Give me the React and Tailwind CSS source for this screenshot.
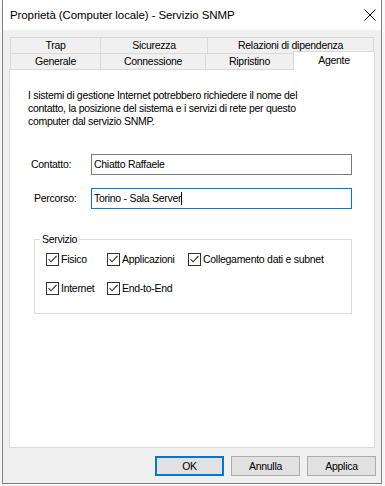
import React from "react";

const Check = ({ label }) => (
  <div className="flex items-center gap-[2px]">
    <span className="w-[13px] h-[13px] border border-[#333333] bg-white flex items-center justify-center">
      <svg width="11" height="11" viewBox="0 0 11 11">
        <path d="M1.5 5 L4 7.8 L9.5 2" stroke="#333333" strokeWidth="1.1" fill="none" />
      </svg>
    </span>
    <span>{label}</span>
  </div>
);

const Tab = ({ children, className }) => (
  <div className={`h-[16px] border-l border-t border-[#d9d9d9] flex items-center justify-center ${className}`}>
    {children}
  </div>
);

export default function App() {
  return (
    <div className="w-[385px] h-[486px] bg-[#f7f7f7] text-[10.5px] tracking-[-0.28px] leading-[13px] text-black font-['Liberation_Sans',Arial,sans-serif]">
      <div className="ml-[2px] w-[380px] h-[484px] border-x border-b border-[#7f7f7f] bg-[#f0f0f0] flex flex-col">
        {/* title bar */}
        <div className="h-[30px] bg-white flex items-center justify-between pl-[7px] pr-[5px] shrink-0">
          <span className="text-[11.5px] tracking-[-0.1px]">Proprietà (Computer locale) - Servizio SNMP</span>
          <svg width="12" height="12" viewBox="0 0 12 12">
            <path d="M0.5 0.5 L11.5 11.5 M11.5 0.5 L0.5 11.5" stroke="#000" strokeWidth="1" />
          </svg>
        </div>

        <div className="pl-[6px] pt-[7px]">
          {/* tabs */}
          <div className="ml-[1px] flex">
            <Tab className="w-[90px]">Trap</Tab>
            <Tab className="w-[107px]">Sicurezza</Tab>
            <Tab className="w-[167px] border-r">Relazioni di dipendenza</Tab>
          </div>
          <div className="ml-[1px] flex items-end h-[16px]">
            <Tab className="w-[90px]">Generale</Tab>
            <Tab className="w-[105px]">Connessione</Tab>
            <Tab className="w-[88px]">Ripristino</Tab>
            <div className="relative z-10 w-[82px] h-[19px] -mb-[1px] bg-white border-l border-t border-r border-[#d9d9d9] flex items-start justify-center pt-[2px]">
              Agente
            </div>
          </div>

          {/* panel */}
          <div className="w-[366px] h-[379px] bg-white border border-[#d9d9d9]">
            <p className="mt-[19px] ml-[18px]">
              I sistemi di gestione Internet potrebbero richiedere il nome del
              <br />
              contatto, la posizione del sistema e i servizi di rete per questo
              <br />
              computer dal servizio SNMP.
            </p>

            <div className="mt-[26px] flex items-center h-[21px]">
              <span className="w-[81px] pl-[21px]">Contatto:</span>
              <div className="w-[261px] h-[21px] border border-[#7a7a7a] pl-[2px] flex items-center">Chiatto Raffaele</div>
            </div>
            <div className="mt-[13px] flex items-center h-[21px]">
              <span className="w-[81px] pl-[24px]">Percorso:</span>
              <div className="w-[261px] h-[21px] border border-[#0078d7] pl-[2px] flex items-center">
                Torino - Sala Server
                <span className="w-[1px] h-[13px] bg-black" />
              </div>
            </div>

            <div className="relative mt-[30px] ml-[24px] w-[318px] h-[75px] border border-[#dcdcdc] pl-[11px] pt-[11px]">
              <span className="absolute -top-[7px] left-[5px] px-[2px] bg-white">Servizio</span>
              <div className="flex h-[16px] items-center">
                <div className="w-[61px]"><Check label="Fisico" /></div>
                <div className="w-[81px]"><Check label="Applicazioni" /></div>
                <Check label="Collegamento dati e subnet" />
              </div>
              <div className="mt-[13px] flex h-[16px] items-center">
                <div className="w-[61px]"><Check label="Internet" /></div>
                <Check label="End-to-End" />
              </div>
            </div>
          </div>

          {/* buttons */}
          <div className="w-[367px] mt-[8px] flex justify-end gap-[7px]">
            <button className="w-[69px] h-[20px] bg-[#e1e1e1] border-2 border-[#0078d7] flex items-center justify-center">OK</button>
            <button className="w-[69px] h-[20px] bg-[#e1e1e1] border border-[#adadad] flex items-center justify-center">Annulla</button>
            <button className="w-[69px] h-[20px] bg-[#e1e1e1] border border-[#adadad] flex items-center justify-center">Applica</button>
          </div>
        </div>
      </div>
    </div>
  );
}
